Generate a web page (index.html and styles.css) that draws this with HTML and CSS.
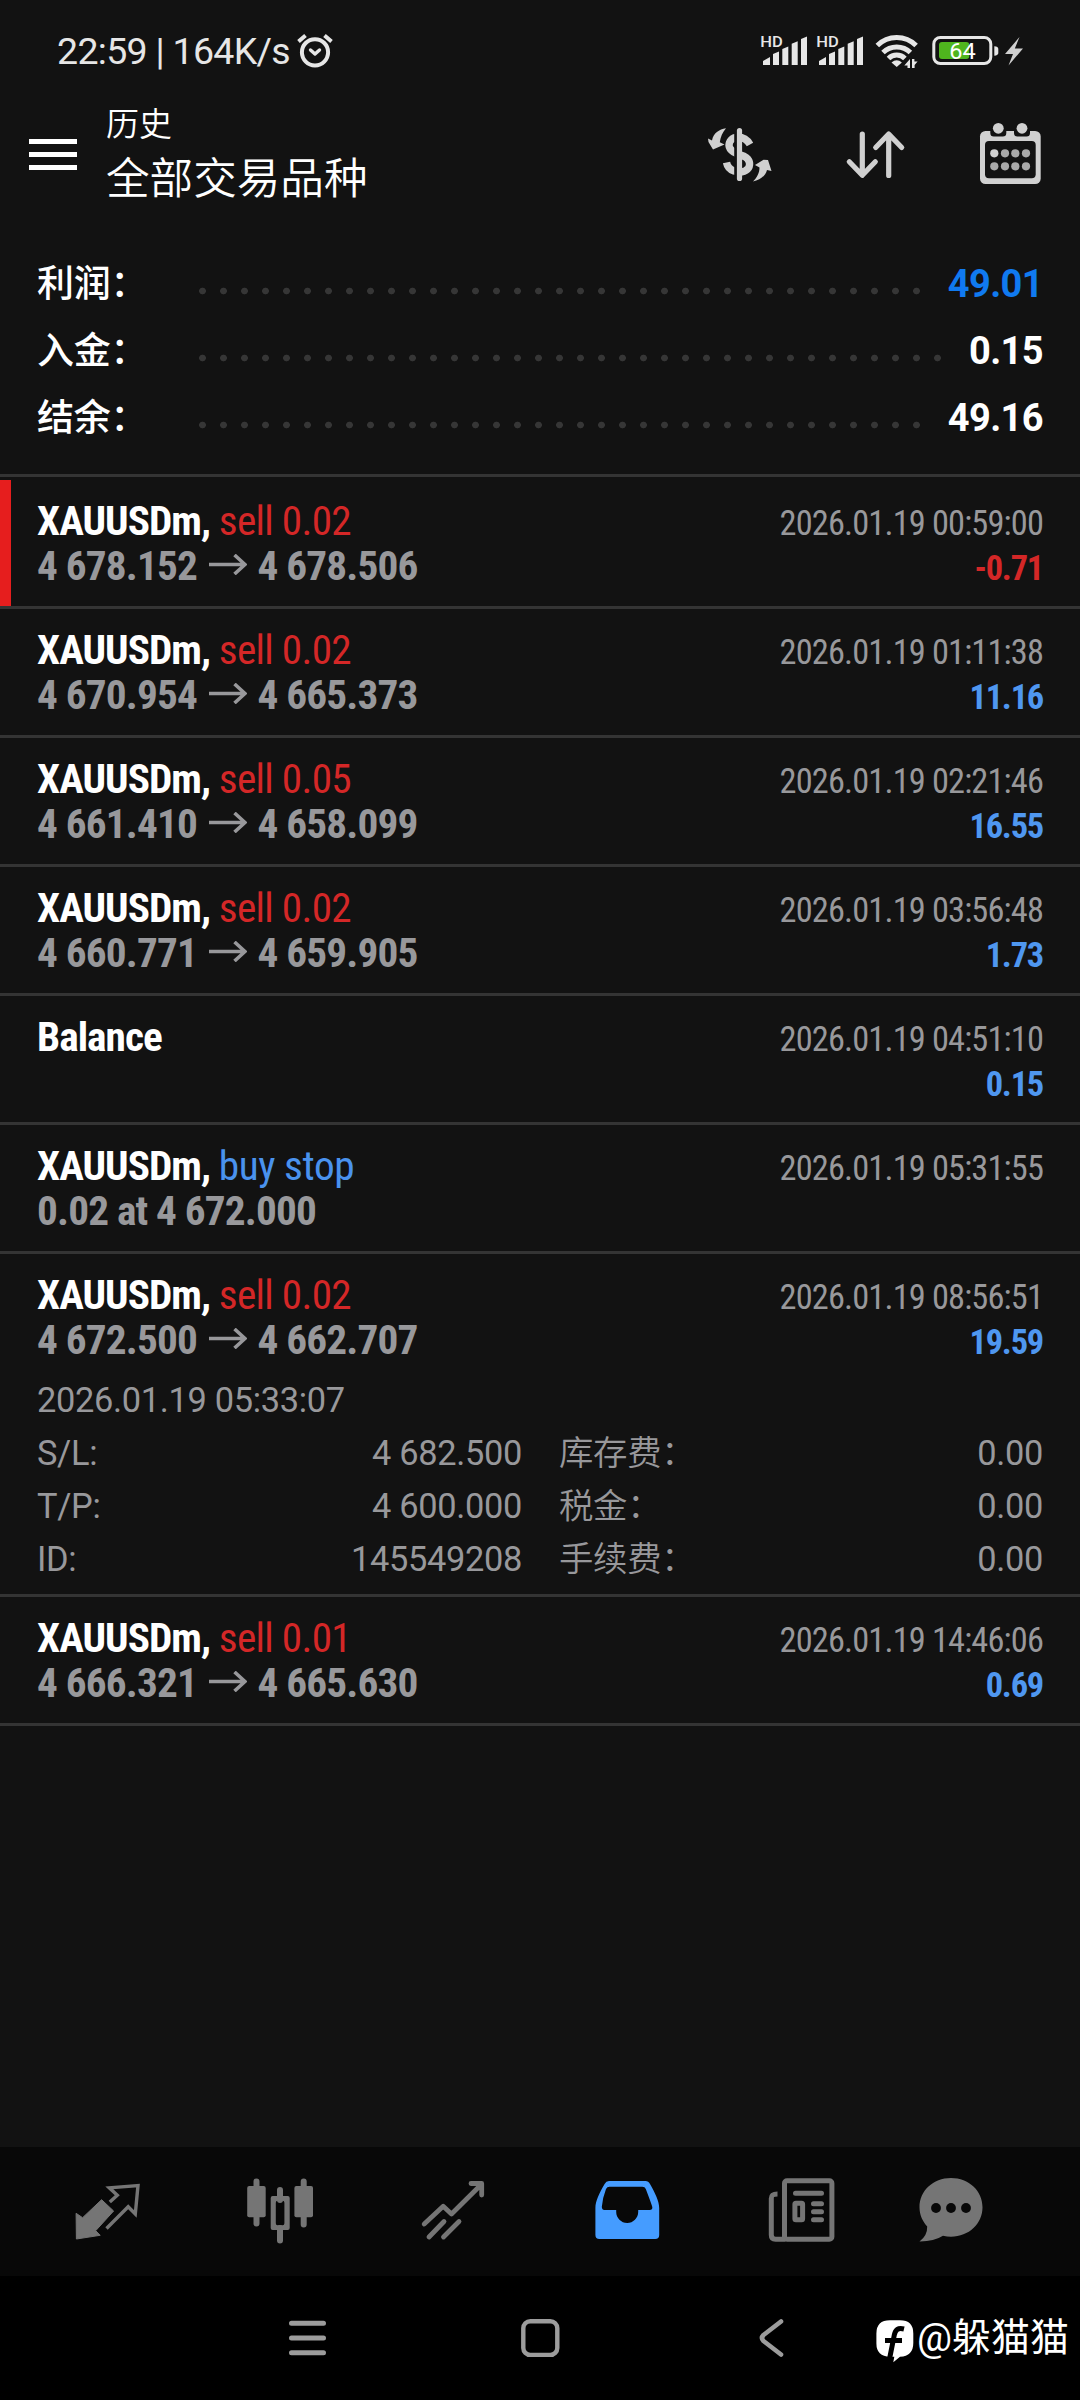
FILE: index.html
```html
<!DOCTYPE html>
<html lang="zh-CN">
<head>
<meta charset="utf-8">
<title>历史</title>
<link rel="stylesheet" href="styles.css">
</head>
<body>
<div class="screen">
  <div class="statusbar">
    <span class="clock">22:59 | 164K/s</span>
    <svg class="alarm" width="40" height="38" viewBox="295 32 40 38" fill="none" stroke="#e6e6e6" stroke-width="4" stroke-linecap="round" stroke-linejoin="round"><circle cx="315" cy="52.3" r="13.1"/><path d="M298.5 41.5l7-6M331.5 41.5l-7-6" stroke-linecap="butt"/><path d="M310.5 50l4.5 4 4.5-4" stroke-width="3.4"/></svg>
    <svg class="indicators" width="270" height="40" viewBox="758 32 270 40" fill="#e6e6e6">
      <g id="signal"><text class="hd" x="760.3" y="47" textLength="22.5" lengthAdjust="spacingAndGlyphs">HD</text><path d="M763 61l7-4v8h-7zM773 54l6-2.5V65h-6zM782.3 49l6-2.5V65h-6zM791.7 43.700l6-2.500V65h-6zM801 39l6-2.500V65h-6z"/></g>
      <use href="#signal" x="56"/>
      <g fill="none" stroke="#e6e6e6" stroke-width="5"><path d="M877.300 45.500a27.500 27.500 0 0 1 38.800 0"/><path d="M883 52.500a19.500 19.500 0 0 1 27.400 0"/><path d="M888.500 58.500a11.500 11.500 0 0 1 16.400 0"/></g>
      <path d="M891.500 62.500q5.200-4.600 10.400 0l-5.200 4.500z"/>
      <path d="M907.500 68v-2.500h-3.200l5.700-6.500v9zM912 68v-9h2.400v2.500h3.200l-3 3.500v3z"/>
      <rect x="933.800" y="37.500" width="57" height="26" rx="6.500" fill="none" stroke="#e6e6e6" stroke-width="3"/>
      <rect x="939" y="42" width="30.300" height="17" rx="3" fill="#4fb51e"/>
      <text class="level" x="949.300" y="59.200" textLength="26.500" lengthAdjust="spacingAndGlyphs">64</text>
      <path d="M994.300 46.300q4 .3 4 2.700v4q0 2.400-4 2.700z"/>
      <path d="M1019.500 37L1005 54h8l-4.500 11.500L1023 48.500h-8.200z" fill="#cfcfcf"/>
    </svg>
  </div>

  <header class="appbar">
    <svg class="burger" width="48" height="32" viewBox="0 0 48 32" fill="#fff"><path d="M0 0h48v5H0zM0 13h48v5H0zM0 26h48v5H0z"/></svg>
    <div class="titles"><div class="subtitle">历史</div><div class="title">全部交易品种</div></div>
    <svg class="actions" width="336" height="66" viewBox="706 121 336 66" fill="#d0d0d0">
      <path d="M750 144.500C746.500 138.500 742.500 137.300 738 137.300C731.500 137.500 729 141.500 729 145.500C729.500 152.500 740 154.500 744.500 156.500C750 159.300 750.500 164.500 748.500 168C745.500 172.500 739 172.500 734 171C729.500 169.500 727.300 166.500 726.500 162.500" fill="none" stroke="#d0d0d0" stroke-width="7.400"/>
      <path d="M735.700 130v48" stroke="#121212" stroke-width="3"/>
      <path d="M739.500 130.500v48" stroke="#d0d0d0" stroke-width="5.200" stroke-linecap="round"/>
      <path d="M726 128.300C719 129.500 713.500 133 712 140.500L708 138.500L708.500 142L713 149.500L724.500 144.500L719.800 142.300C720.500 137 722.500 132.500 726 128.300z"/>
      <path d="M753 181.500C760 180 765.500 176 767 170L771.500 171L768 160L763.500 159.800L755 165L759.500 167.500C759.500 173 757 177.500 753 181.500z"/>
      <path d="M862.300 134v41M849.300 161.800l13 13.500 13-13.500M888.700 175.500v-41M875.700 147.500l13-13.500 13 13.500" fill="none" stroke="#d0d0d0" stroke-width="5.200" stroke-linecap="round" stroke-linejoin="round"/>
      <rect x="980" y="131" width="60.700" height="53" rx="5.500"/>
      <rect x="985" y="141" width="50.700" height="37.300" rx="4" fill="#121212"/>
      <path d="M990.300 131h16v2q0 3.500-3.500 3.500h-9q-3.500 0-3.500-3.500zM1014 131h16v2q0 3.500-3.500 3.500h-9q-3.500 0-3.500-3.500z" fill="#121212"/>
      <circle cx="998.300" cy="128.300" r="5.400"/><circle cx="1022" cy="128.300" r="5.400"/>
      <circle cx="994.300" cy="153.300" r="4.100"/>
      <g fill="#a9a9a9"><circle cx="1005" cy="153.300" r="4.100"/><circle cx="1015.300" cy="153.300" r="4.100"/><circle cx="1026" cy="153.300" r="4.100"/><circle cx="994.300" cy="166.300" r="4.100"/><circle cx="1005" cy="166.300" r="4.100"/><circle cx="1015.300" cy="166.300" r="4.100"/><circle cx="1026" cy="166.300" r="4.100"/></g>
    </svg>
  </header>

  <section class="summary">
    <div class="sum"><span class="sum-label">利润：</span><span class="leader"></span><span class="sum-value accent">49.01</span></div>
    <div class="sum"><span class="sum-label">入金：</span><span class="leader long"></span><span class="sum-value">0.15</span></div>
    <div class="sum"><span class="sum-label">结余：</span><span class="leader"></span><span class="sum-value">49.16</span></div>
  </section>

  <main class="deals">
    <article class="deal loss">
      <div class="line"><span class="name"><b>XAUUSDm,</b> <span class="sell">sell 0.02</span></span><time>2026.01.19 00:59:00</time></div>
      <div class="line"><span class="price">4 678.152 <svg class="arrow" viewBox="0 0 38 21"><path d="M0 10.500h36M25.500 1l10.500 9.500-10.500 9.500"/></svg> 4 678.506</span><span class="profit neg">-0.71</span></div>
    </article>
    <article class="deal">
      <div class="line"><span class="name"><b>XAUUSDm,</b> <span class="sell">sell 0.02</span></span><time>2026.01.19 01:11:38</time></div>
      <div class="line"><span class="price">4 670.954 <svg class="arrow" viewBox="0 0 38 21"><path d="M0 10.500h36M25.500 1l10.500 9.500-10.500 9.500"/></svg> 4 665.373</span><span class="profit">11.16</span></div>
    </article>
    <article class="deal">
      <div class="line"><span class="name"><b>XAUUSDm,</b> <span class="sell">sell 0.05</span></span><time>2026.01.19 02:21:46</time></div>
      <div class="line"><span class="price">4 661.410 <svg class="arrow" viewBox="0 0 38 21"><path d="M0 10.500h36M25.500 1l10.500 9.500-10.500 9.500"/></svg> 4 658.099</span><span class="profit">16.55</span></div>
    </article>
    <article class="deal">
      <div class="line"><span class="name"><b>XAUUSDm,</b> <span class="sell">sell 0.02</span></span><time>2026.01.19 03:56:48</time></div>
      <div class="line"><span class="price">4 660.771 <svg class="arrow" viewBox="0 0 38 21"><path d="M0 10.500h36M25.500 1l10.500 9.500-10.500 9.500"/></svg> 4 659.905</span><span class="profit">1.73</span></div>
    </article>
    <article class="deal">
      <div class="line"><span class="name"><b>Balance</b></span><time>2026.01.19 04:51:10</time></div>
      <div class="line"><span class="price">&nbsp;</span><span class="profit">0.15</span></div>
    </article>
    <article class="deal">
      <div class="line"><span class="name"><b>XAUUSDm,</b> <span class="buy">buy stop</span></span><time>2026.01.19 05:31:55</time></div>
      <div class="line"><span class="price">0.02 at 4 672.000</span></div>
    </article>
    <article class="deal open">
      <div class="line"><span class="name"><b>XAUUSDm,</b> <span class="sell">sell 0.02</span></span><time>2026.01.19 08:56:51</time></div>
      <div class="line"><span class="price">4 672.500 <svg class="arrow" viewBox="0 0 38 21"><path d="M0 10.500h36M25.500 1l10.500 9.500-10.500 9.500"/></svg> 4 662.707</span><span class="profit">19.59</span></div>
      <div class="details">
        <span class="opened">2026.01.19 05:33:07</span>
        <span>S/L:</span><span class="num">4 682.500</span><span class="fee">库存费：</span><span class="num">0.00</span>
        <span>T/P:</span><span class="num">4 600.000</span><span class="fee">税金：</span><span class="num">0.00</span>
        <span>ID:</span><span class="num">145549208</span><span class="fee">手续费：</span><span class="num">0.00</span>
      </div>
    </article>
    <article class="deal">
      <div class="line"><span class="name"><b>XAUUSDm,</b> <span class="sell">sell 0.01</span></span><time>2026.01.19 14:46:06</time></div>
      <div class="line"><span class="price">4 666.321 <svg class="arrow" viewBox="0 0 38 21"><path d="M0 10.500h36M25.500 1l10.500 9.500-10.500 9.500"/></svg> 4 665.630</span><span class="profit">0.69</span></div>
    </article>
  </main>

  <nav class="tabs">
    <svg width="1080" height="129" viewBox="0 2147 1080 129" fill="#757575">
      <path d="M76.100 2213.300l6.500 4.400 19-18 12 11.300-17.900 19.700 4.500 4.600-23.800 3.700z" stroke="#757575" stroke-width="1" stroke-linejoin="round"/>
      <path d="M109.800 2202l7.500-6.800-8-7.400 28.700-2.300-2.700 28.500-7.100-7.300-21.700 21.800" fill="none" stroke="#757575" stroke-width="3.400"/>
      <path d="M256.500 2181.500v42M280 2190v10M280 2228v12.500M303.700 2181.500v43" stroke="#757575" stroke-width="6" stroke-linecap="round"/>
      <rect x="247.200" y="2186" width="18.500" height="31.300" rx="2"/><rect x="294.400" y="2186" width="18.600" height="31.300" rx="2"/>
      <path fill-rule="evenodd" d="M272.700 2196h15q2 0 2 2v30q0 2-2 2h-15q-2 0-2-2v-30q0-2 2-2zM277.500 2200.700q-1.700 0-1.700 2v20.600q0 2 1.700 2h5.200q1.700 0 1.700-2v-20.600q0-2-1.700-2z"/>
      <g fill="none" stroke="#757575" stroke-width="4.800" stroke-linejoin="round" stroke-linecap="round"><path d="M424.200 2224l19-17.700 8.300 7.700 30-29.800M471 2183.500h10.700v11.500"/><path d="M429 2237l15-15.500M443.500 2237l15.500-15.500"/></g>
      <path fill="#459cff" fill-rule="evenodd" d="M609 2181h36.500q3 0 4.500 3c5 9 9.200 17 9.200 24v27q0 4-4 4h-55.800q-4 0-4-4v-27c0-7 4-15 9.200-24q1.500-3 4.400-3zM609.500 2186.700q-2.500 0-3.500 2.300-3.500 9-4.200 18 .3 3 2.500 3h11.900v2c0 6 5 11 11 11s11-5 11-11v-2h11.500q3 0 2.600-3-.800-3-6.500-18-.900-2.300-3.500-2.300z"/>
      <g fill="none" stroke="#757575" stroke-width="5" stroke-linecap="round"><rect x="784.500" y="2180.700" width="47.400" height="58.500" rx="2.500"/><path d="M777.500 2194c-5 0-6.200 1.500-6.200 4.500v36.500q0 4.200 4.200 4.200h10" stroke-linecap="butt"/><path d="M795.500 2193.300h26M813.500 2203.700h8M813.500 2211.700h8M813.500 2219.700h8"/><rect x="794.900" y="2203.200" width="7.700" height="16.600" rx="1"/></g>
      <path d="M951 2178c18 0 31.500 13 31.500 29.300s-13.500 29.400-31.500 29.400q-4 0-8-1-9 5.800-23.500 5.700 8-6 7.700-15c-4.700-5-7.700-11.500-7.700-19.100 0-16.300 13.500-29.300 31.500-29.300z"/>
      <g fill="#080808"><circle cx="936" cy="2208" r="4.900"/><circle cx="951" cy="2208" r="4.900"/><circle cx="966" cy="2208" r="4.900"/></g>
    </svg>
  </nav>

  <footer class="sysnav">
    <svg class="keys" width="510" height="44" viewBox="285 2316 510 44" fill="none" stroke="#9c9c9c" stroke-width="5" stroke-linecap="round" stroke-linejoin="round"><path d="M291.500 2323.300h32M291.500 2338h32M291.500 2352.700h32"/><rect x="523.300" y="2321.200" width="34" height="33.700" rx="7" stroke-width="4.400"/><path d="M781 2321.500l-17.500 13.500q-3 3 0 6l17.500 13.500" stroke-width="4.600"/></svg>
    <div class="watermark">
      <svg width="38" height="44" viewBox="876 2319 38 44"><path fill="#fff" d="M890 2320.300h10q13.300 0 13.300 13.200v9.500q0 13.200-13.300 13.700l-6.700 5.600 1-5.600h-4.300q-13.600-.2-13.600-13.200v-10q0-13.200 13.600-13.200z"/><path fill="none" stroke="#000" stroke-width="5" d="M904 2329c-6-1.500-8.500.5-9.700 6l-4.800 24M885 2340.500h17"/></svg>
      <span class="handle">@躲猫猫</span>
    </div>
  </footer>
</div>
</body>
</html>
```
FILE: styles.css
```css
* { box-sizing: border-box; }
body { margin: 0; background: #000; }
.screen {
  width: 1080px; height: 2400px; display: flex; flex-direction: column;
  background: #121212; color: #fff; overflow: hidden;
  font-family: Roboto, "Noto Sans CJK SC", sans-serif;
}
svg { display: block; flex: none; }

.statusbar { height: 104px; display: flex; padding: 32px 52px 0 57px; }
.clock { width: 238px; font-size: 37.5px; line-height: 38px; letter-spacing: -0.7px; color: #e6e6e6; white-space: nowrap; }
.indicators { margin-left: auto; }
.hd { font: 500 15.500px Roboto, sans-serif; }
.level { font: 400 22.500px Roboto, sans-serif; fill: #fff; }

.appbar { height: 145px; display: flex; padding: 0 38px 0 29px; }
.burger { margin-top: 35px; }
.titles { margin-left: 29px; font-weight: 350; }
.subtitle { font-size: 33px; line-height: 40px; margin-top: 1px; }
.title { font-size: 43.600px; line-height: 60px; margin-top: 5px; }
.actions { margin: 17px 0 0 auto; }

.summary { height: 228px; padding: 0 37px; border-bottom: 3px solid #343434; }
.sum { height: 67px; display: flex; align-items: center; }
.sum-label { width: 155px; font-size: 37px; font-weight: 500; margin-top: -3px; letter-spacing: -0.300px; }
.leader { width: 735px; height: 8px; margin-top: 17px; background: radial-gradient(circle at center, #363636 3px, transparent 3.700px) 0 0 / 21px 8px repeat-x; }
.leader.long { width: 756px; }
.sum-value { margin: 2px 0 0 auto; font-size: 38px; font-weight: 700; letter-spacing: -0.600px; }
.accent { color: #107af0; }

.deals { flex: 1; padding-top: 3px; }
.deal { height: 129px; padding: 19px 37px 0; border-bottom: 3px solid #343434; font-family: "Roboto Condensed", Roboto, sans-serif; font-stretch: 75%; letter-spacing: -0.820px; }
.loss { box-shadow: inset 11px 0 #e61e1e; }
.line { height: 45px; display: flex; justify-content: space-between; align-items: baseline; line-height: 45px; white-space: nowrap; }
.name, .price { font-size: 41.250px; }
.name b { letter-spacing: -0.950px; }
.price { color: #98989b; font-weight: 700; }
.sell, .neg { color: #d42727; }
.sell { letter-spacing: -0.700px; }
.buy { color: #4a92ee; letter-spacing: -0.400px; }
.arrow { display: inline-block; width: 38px; height: 21px; margin: 0 2px 0 3px; vertical-align: 5px; }
.arrow path { fill: none; stroke: #98989b; stroke-width: 3.600; }
time { font-size: 34.400px; color: #98989b; letter-spacing: -0.860px; }
.profit { font-size: 34.400px; font-weight: 700; color: #4f97f0; letter-spacing: -1.200px; }
.profit.neg { color: #d42727; }
.open { height: 343px; }
.details {
  display: grid; grid-template-columns: 100px 385px 200px 1fr; grid-auto-rows: 53px;
  margin-top: 11px; letter-spacing: -0.320px;
  font-family: Roboto, "Noto Sans CJK SC", sans-serif; font-stretch: 100%; font-size: 34.400px; line-height: 53px;
  font-weight: 390; color: #98989b;
}
.details span { height: 53px; white-space: nowrap; }
.opened { grid-column: 1 / -1; }
.num { text-align: right; }
.fee { padding-left: 37px; font-weight: 350; }

.tabs { height: 129px; background: #080808; }
.sysnav { height: 124px; background: #000; display: flex; }
.keys { margin: 40px 0 0 285px; }
.watermark { display: flex; margin: 43px 0 0 81px; }
.handle { margin-left: 3px; font-size: 39px; line-height: 38px; white-space: nowrap; }
```
